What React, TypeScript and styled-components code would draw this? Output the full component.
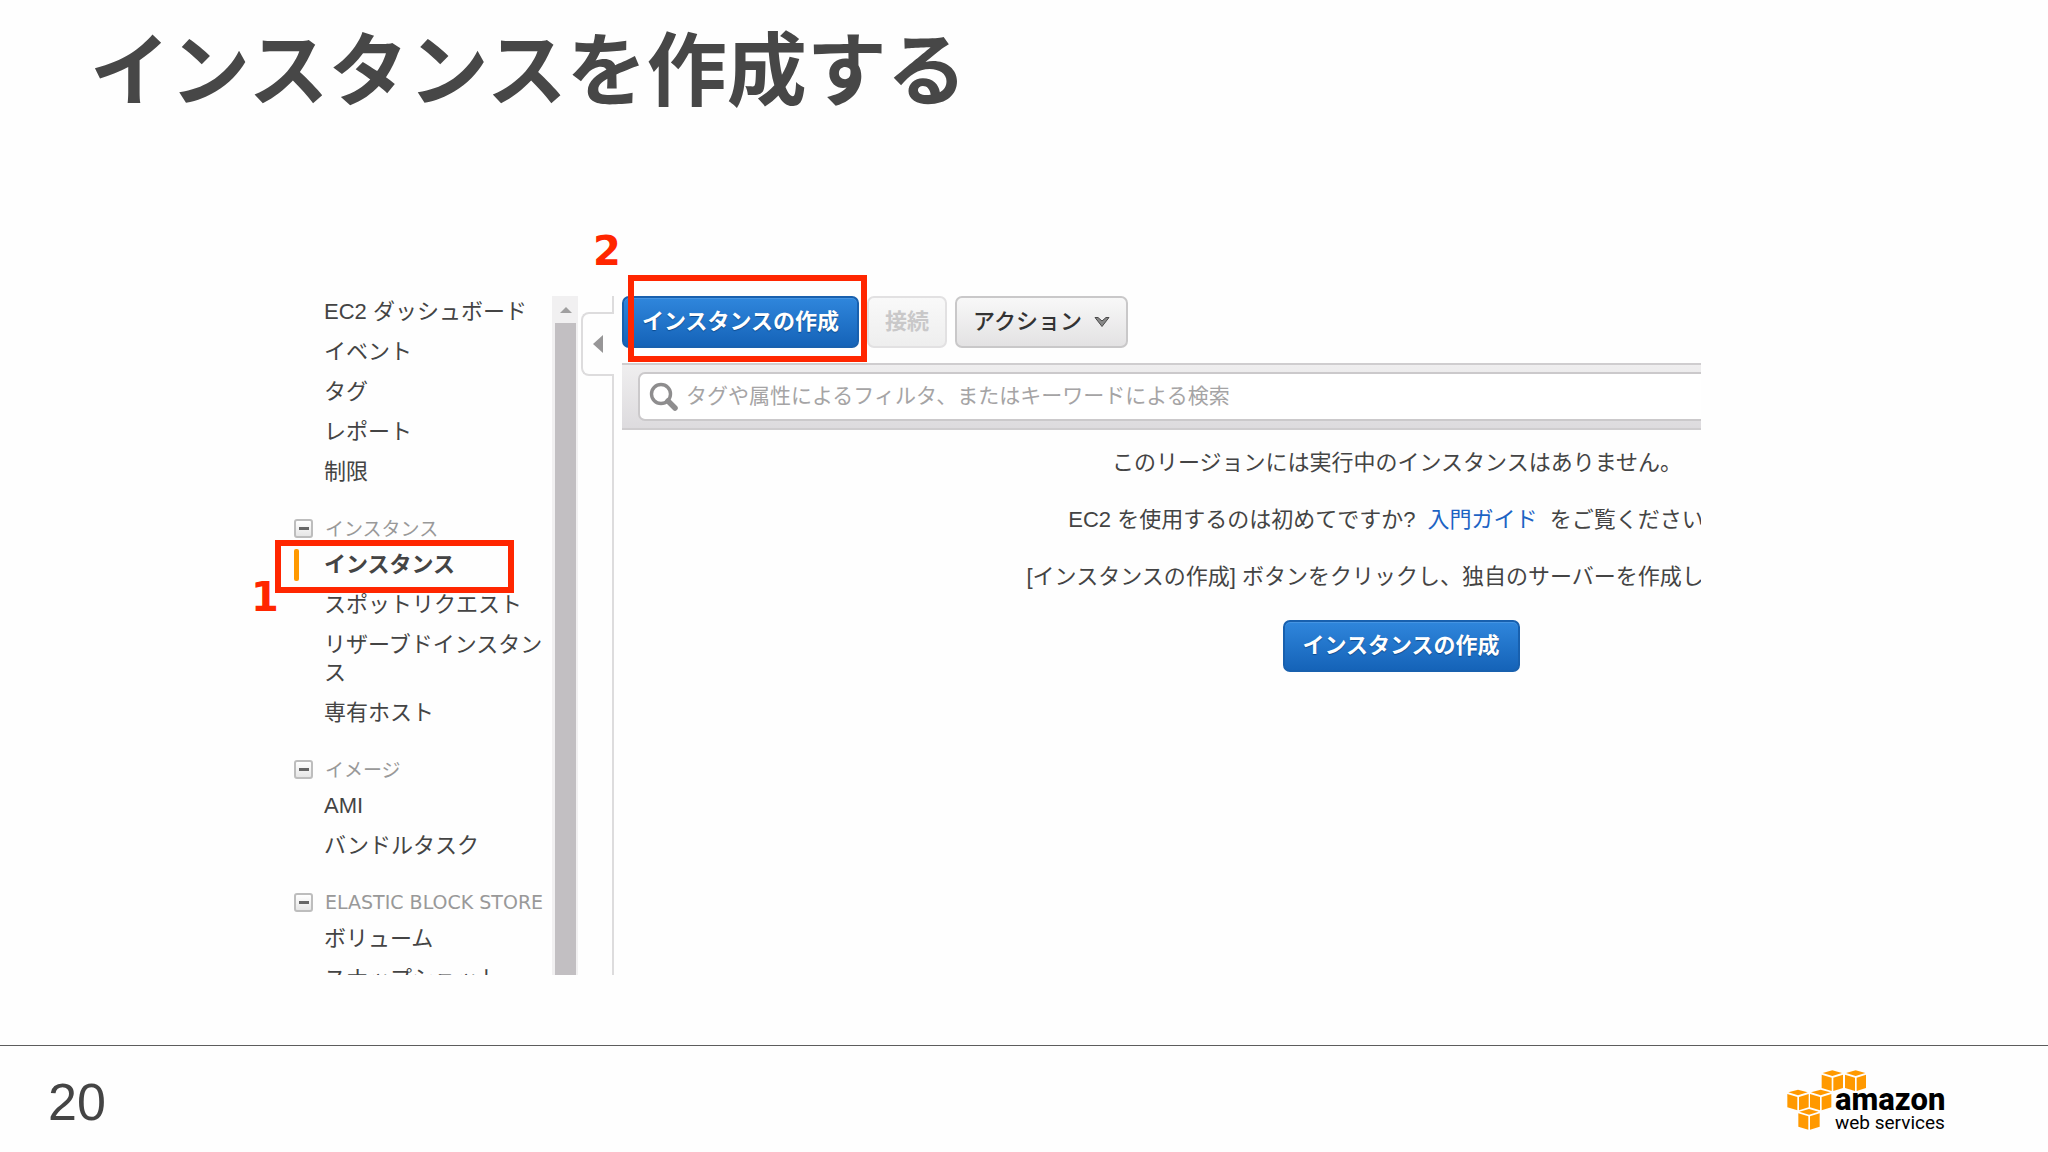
import React from "react";
import styled, { createGlobalStyle, css } from "styled-components";

const sans = `"Liberation Sans", "Noto Sans CJK JP", sans-serif`;
const ink = "#444444";
const marker = "#ff2600";

const GlobalStyle = createGlobalStyle`
  *, *::before, *::after { box-sizing: border-box; }
  body { margin: 0; background: #fefefe; color: ${ink}; font-family: ${sans}; }
`;

const Slide = styled.div`
  display: flex;
  flex-direction: column;
  height: 100vh;
  overflow: hidden;
`;

const SlideHeader = styled.header`
  padding: 24px 90px 192px;
`;

const SlideTitle = styled.h1`
  margin: 0;
  font-family: "Noto Sans CJK JP", sans-serif;
  font-size: 80px;
  line-height: 80px;
  font-weight: 700;
  color: #474747;
`;

const Figure = styled.div`
  position: relative;
  flex: 1;
  min-height: 0;
  display: flex;
  margin: 0 347px 70px 294px;
`;

const Console = styled.div`
  flex: 1;
  min-width: 0;
  display: flex;
  overflow: hidden;
`;

const Sidebar = styled.nav`
  flex: none;
  width: 258px;
  padding-top: 2px;
`;

const NavList = styled.ul`
  margin: 0;
  padding: 0;
  list-style: none;
`;

const NavItem = styled.li<{ $active?: boolean }>`
  position: relative;
  margin-bottom: 12px;
  padding-left: 30px;
  font-size: 22px;
  line-height: 28px;
  font-weight: ${(p) => (p.$active ? 700 : 400)};
  ${(p) =>
    p.$active &&
    css`
      &::before {
        content: "";
        position: absolute;
        left: 0;
        top: -2px;
        bottom: -2px;
        width: 5px;
        border-radius: 2px;
        background: #ff9900;
      }
    `}
`;

const NavLink = styled.a`
  color: inherit;
  text-decoration: none;
`;

const SectionHeading = styled.div`
  display: flex;
  align-items: center;
  gap: 12px;
  margin: 28px 0 9px;
  font-size: 19px;
  line-height: 28px;
  color: #999999;
  white-space: nowrap;
`;

const HeadingLabel = styled.span<{ $latin: boolean }>`
  font-family: ${(p) =>
    p.$latin ? `"DejaVu Sans", sans-serif` : `"Noto Sans CJK JP", sans-serif`};
`;

const CollapseButton = styled.button`
  flex: none;
  display: grid;
  place-items: center;
  width: 19px;
  height: 19px;
  padding: 0;
  border: 2px solid #bdbdbd;
  border-radius: 3px;
  background: linear-gradient(#ffffff, #e6e6e6);
  &::before {
    content: "";
    width: 10px;
    height: 3px;
    background: #666666;
  }
`;

const ScrollTrack = styled.div`
  flex: none;
  width: 26px;
  display: flex;
  flex-direction: column;
  padding: 0 2px 0 3px;
  background: #f1f0f1;
`;

const ScrollUp = styled.div`
  display: grid;
  place-items: center;
  height: 27px;
  svg { display: block; }
`;

const ScrollThumb = styled.div`
  flex: 1;
  background: #c2bfc2;
`;

const Divider = styled.div`
  flex: none;
  width: 36px;
  margin-right: 8px;
  display: flex;
  flex-direction: column;
`;

const DividerLine = styled.div<{ $fill?: boolean }>`
  ${(p) => (p.$fill ? "flex: 1;" : "height: 16px;")}
  border-right: 2px solid #dddcdd;
`;

const PaneToggle = styled.button`
  height: 64px;
  margin: 0 0 0 3px;
  padding: 0 10px;
  display: flex;
  align-items: center;
  border: 2px solid #dddcdd;
  border-right: 0;
  border-radius: 8px 0 0 8px;
  background: transparent;
`;

const Workspace = styled.main`
  flex: 1;
  min-width: 0;
`;

/* The console is wider than its frame, so the right part is cut off. */
const WideArea = styled.div`
  width: calc(100% + 479px);
`;

const Toolbar = styled.div`
  display: flex;
  gap: 8px;
  margin-bottom: 15px;
`;

const buttonBase = css`
  height: 52px;
  padding: 0 16px;
  display: inline-flex;
  align-items: center;
  justify-content: center;
  gap: 12px;
  border-radius: 7px;
  font-family: ${sans};
  font-size: 22px;
  line-height: 28px;
  white-space: nowrap;
`;

const PrimaryButton = styled.button`
  ${buttonBase}
  width: 237px;
  border: 2px solid #1860ae;
  background: linear-gradient(#2f86dc, #1563b8);
  box-shadow: inset 0 1px 0 #4594e2;
  color: #ffffff;
  font-weight: 700;
  text-shadow: 0 1px 1px #0d4a8c;
`;

const PlainButton = styled.button`
  ${buttonBase}
  border: 2px solid #c9c8c9;
  background: linear-gradient(#f8f8f8, #e3e2e3);
  color: #333333;
  font-weight: 500;
  &:disabled {
    border-color: #e2e1e2;
    background: linear-gradient(#f9f9f9, #eeeeee);
    color: #c9c8c9;
    font-weight: 700;
  }
`;

const FilterBar = styled.div`
  height: 67px;
  padding: 7px 0 0 16px;
  border-top: 2px solid #cfcdcf;
  border-bottom: 2px solid #cfcdcf;
  background: linear-gradient(#efeeef, #dddbde);
`;

const SearchBox = styled.label`
  display: flex;
  align-items: center;
  gap: 8px;
  height: 49px;
  padding: 0 9px;
  border: 2px solid #cbc9cb;
  border-radius: 7px;
  background: #ffffff;
`;

const SearchInput = styled.input`
  flex: 1;
  padding: 0 0 2px;
  border: 0;
  outline: 0;
  background: transparent;
  color: ${ink};
  font-family: ${sans};
  font-size: 21px;
  line-height: 28px;
  &::placeholder { color: #a5a4a5; opacity: 1; }
`;

const EmptyState = styled.section`
  display: flex;
  flex-direction: column;
  align-items: center;
  padding-top: 19px;
`;

const Message = styled.p`
  margin: 0 0 29px;
  padding-right: 8px;
  font-size: 22px;
  line-height: 28px;
  white-space: nowrap;
`;

const GuideLink = styled.a`
  margin: 0 6px;
  color: #1c63c4;
  text-decoration: none;
`;

const Highlight = styled.div<{ $x: number; $y: number; $w: number; $h: number }>`
  position: absolute;
  left: ${(p) => p.$x}px;
  top: ${(p) => p.$y}px;
  width: ${(p) => p.$w}px;
  height: ${(p) => p.$h}px;
  border: 6px solid ${marker};
  pointer-events: none;
`;

const StepNumber = styled.span<{ $x: number; $y: number }>`
  position: absolute;
  left: ${(p) => p.$x}px;
  top: ${(p) => p.$y}px;
  color: ${marker};
  font-family: "DejaVu Sans", sans-serif;
  font-size: 40px;
  line-height: 40px;
  font-weight: 700;
`;

const SlideFooter = styled.footer`
  display: flex;
  align-items: flex-start;
  justify-content: space-between;
  height: 107px;
  padding: 24px 102px 0 48px;
  border-top: 1px solid #5c5c5c;
`;

const PageNumber = styled.span`
  margin-top: 4px;
  font-size: 52px;
  line-height: 56px;
`;

const Logo = styled.div`
  display: grid;
  width: 160px;
  > * { grid-area: 1 / 1; }
`;

const LogoText = styled.div`
  display: flex;
  flex-direction: column;
  padding: 16px 0 0 49px;
  color: #000000;
  font-family: Roboto, sans-serif;
  white-space: nowrap;
`;

const LogoName = styled.span`
  font-size: 31px;
  line-height: 28px;
  font-weight: 800;
`;

const LogoSub = styled.span`
  font-size: 19px;
  line-height: 18px;
`;

const cubes = [
  [107, 0],
  [177, 0],
  [4, 58],
  [72, 58],
  [37, 116],
];

function CubeMark() {
  return (
    <svg width="80" height="60" viewBox="0 0 240 180" fill="#ff9900" aria-hidden="true">
      {cubes.map(([x, y]) => (
        <g key={`${x}-${y}`} transform={`translate(${x} ${y})`}>
          <path d="M3 9 32 1l29 8-29 9z" />
          <path d="M0 14l30 9v40L0 54z" />
          <path d="M35 23l29-9v40l-29 9z" />
        </g>
      ))}
    </svg>
  );
}

function SearchIcon() {
  return (
    <svg width="29" height="29" viewBox="0 0 29 29" fill="none" stroke="#8e8d8e" aria-hidden="true">
      <circle cx="12" cy="12" r="9.5" strokeWidth="3.4" />
      <path d="M19 19l7 7" strokeWidth="5.5" strokeLinecap="round" />
    </svg>
  );
}

type Section = { heading?: string; latin?: boolean; items: string[]; active?: string };

const sections: Section[] = [
  { items: ["EC2 ダッシュボード", "イベント", "タグ", "レポート", "制限"] },
  {
    heading: "インスタンス",
    active: "インスタンス",
    items: ["インスタンス", "スポットリクエスト", "リザーブドインスタンス", "専有ホスト"],
  },
  { heading: "イメージ", items: ["AMI", "バンドルタスク"] },
  { heading: "ELASTIC BLOCK STORE", latin: true, items: ["ボリューム", "スナップショット"] },
];

export default function App() {
  return (
    <Slide lang="ja">
      <GlobalStyle />
      <SlideHeader>
        <SlideTitle>インスタンスを作成する</SlideTitle>
      </SlideHeader>

      <Figure>
        <Console>
          <Sidebar>
            {sections.map((section, i) => (
              <React.Fragment key={i}>
                {section.heading && (
                  <SectionHeading>
                    <CollapseButton type="button" aria-label={section.heading} />
                    <HeadingLabel $latin={!!section.latin}>{section.heading}</HeadingLabel>
                  </SectionHeading>
                )}
                <NavList>
                  {section.items.map((item) => (
                    <NavItem key={item} $active={item === section.active}>
                      <NavLink href="#">{item}</NavLink>
                    </NavItem>
                  ))}
                </NavList>
              </React.Fragment>
            ))}
          </Sidebar>

          <ScrollTrack>
            <ScrollUp>
              <svg width="12" height="6" viewBox="0 0 12 6" aria-hidden="true">
                <path d="M0 6L6 0l6 6z" fill="#a09fa0" />
              </svg>
            </ScrollUp>
            <ScrollThumb />
          </ScrollTrack>

          <Divider>
            <DividerLine />
            <PaneToggle type="button" aria-label="サイドバーを閉じる">
              <svg width="10" height="18" viewBox="0 0 10 18" aria-hidden="true">
                <path d="M10 0v18L0 9z" fill="#979697" />
              </svg>
            </PaneToggle>
            <DividerLine $fill />
          </Divider>

          <Workspace>
            <WideArea>
              <Toolbar>
                <PrimaryButton type="button">インスタンスの作成</PrimaryButton>
                <PlainButton type="button" disabled>
                  接続
                </PlainButton>
                <PlainButton type="button">
                  アクション
                  <svg width="16" height="12" viewBox="0 0 16 12" aria-hidden="true">
                    <path d="M1 1.5h3l4 3.5 4-3.5h3L8 10.5z" fill="#888" stroke="#4a4a4a" />
                  </svg>
                </PlainButton>
              </Toolbar>

              <FilterBar>
                <SearchBox>
                  <SearchIcon />
                  <SearchInput
                    type="text"
                    aria-label="検索"
                    placeholder="タグや属性によるフィルタ、またはキーワードによる検索"
                  />
                </SearchBox>
              </FilterBar>

              <EmptyState>
                <Message>このリージョンには実行中のインスタンスはありません。</Message>
                <Message>
                  EC2 を使用するのは初めてですか? <GuideLink href="#">入門ガイド</GuideLink> をご覧ください。
                </Message>
                <Message>[インスタンスの作成] ボタンをクリックし、独自のサーバーを作成します。</Message>
                <PrimaryButton type="button">インスタンスの作成</PrimaryButton>
              </EmptyState>
            </WideArea>
          </Workspace>
        </Console>

        <Highlight $x={-19} $y={244} $w={239} $h={53} />
        <StepNumber $x={-43} $y={281}>1</StepNumber>
        <Highlight $x={334} $y={-21} $w={239} $h={87} />
        <StepNumber $x={299} $y={-65}>2</StepNumber>
      </Figure>

      <SlideFooter>
        <PageNumber>20</PageNumber>
        <Logo>
          <CubeMark />
          <LogoText>
            <LogoName>amazon</LogoName>
            <LogoSub>web services</LogoSub>
          </LogoText>
        </Logo>
      </SlideFooter>
    </Slide>
  );
}
